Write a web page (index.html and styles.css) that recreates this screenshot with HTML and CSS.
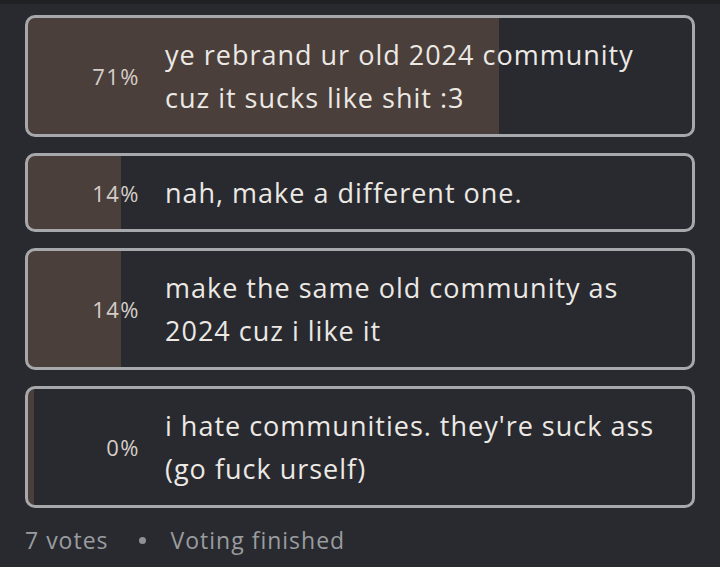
FILE: index.html
```html
<!DOCTYPE html>
<html lang="en">
<head>
    <meta charset="UTF-8">
    <meta name="viewport" content="width=device-width, initial-scale=1.0">
    <title>Poll</title>
    <link rel="stylesheet" href="styles.css">
</head>
<body>
    <div class="topbar"></div>
    <div class="poll">
        <div class="option" style="--pct: 71%;">
            <span class="pct">71%</span>
            <span class="label">ye rebrand ur old 2024 community cuz it sucks like shit :3</span>
        </div>
        <div class="option" style="--pct: 14%;">
            <span class="pct">14%</span>
            <span class="label">nah, make a different one.</span>
        </div>
        <div class="option" style="--pct: 14%;">
            <span class="pct">14%</span>
            <span class="label">make the same old community as 2024 cuz i like it</span>
        </div>
        <div class="option" style="--pct: 0%;">
            <span class="pct">0%</span>
            <span class="label">i hate communities. they're suck ass (go fuck urself)</span>
        </div>

        <div class="poll-footer">
            <span>7 votes</span>
            <span class="dot"></span>
            <span>Voting finished</span>
        </div>
    </div>
</body>
</html>
```

FILE: styles.css
```css
:root {
    --bg: #282a2f;
    --fill: #4a3f3b;
    --border: #a7a8ab;
    --text: #ece8e4;
    --muted: #9a9ca0;
}

* {
    margin: 0;
    padding: 0;
    box-sizing: border-box;
}

body {
    background-color: var(--bg);
    color: var(--text);
    font-family: 'Open Sans', 'Noto Sans', sans-serif;
    font-variant-ligatures: none;
    height: 567px;
    overflow: hidden;
}

.topbar {
    height: 4px;
    background: #1f2125;
}

.poll {
    padding: 11px 25px 0;
}

.option {
    display: grid;
    grid-template-columns: 112px 1fr;
    column-gap: 25px;
    align-items: center;
    border: 3px solid var(--border);
    border-radius: 10px;
    padding: 15px 32px 15px 0;
    margin-bottom: 16px;
    background: linear-gradient(to right, var(--fill) max(var(--pct), 6px), transparent max(var(--pct), 6px));
}

.pct {
    text-align: right;
    font-size: 22px;
    letter-spacing: 1.5px;
    color: #d6cdc8;
}

.label {
    font-size: 27px;
    letter-spacing: 1px;
    line-height: 43px;
}

.poll-footer {
    display: flex;
    align-items: center;
    gap: 25px;
    margin-top: 9px;
    font-size: 23px;
    letter-spacing: 1px;
    color: var(--muted);
}

.dot {
    width: 7px;
    height: 7px;
    margin-left: 5px;
    border-radius: 50%;
    background: #8f9295;
}
```
